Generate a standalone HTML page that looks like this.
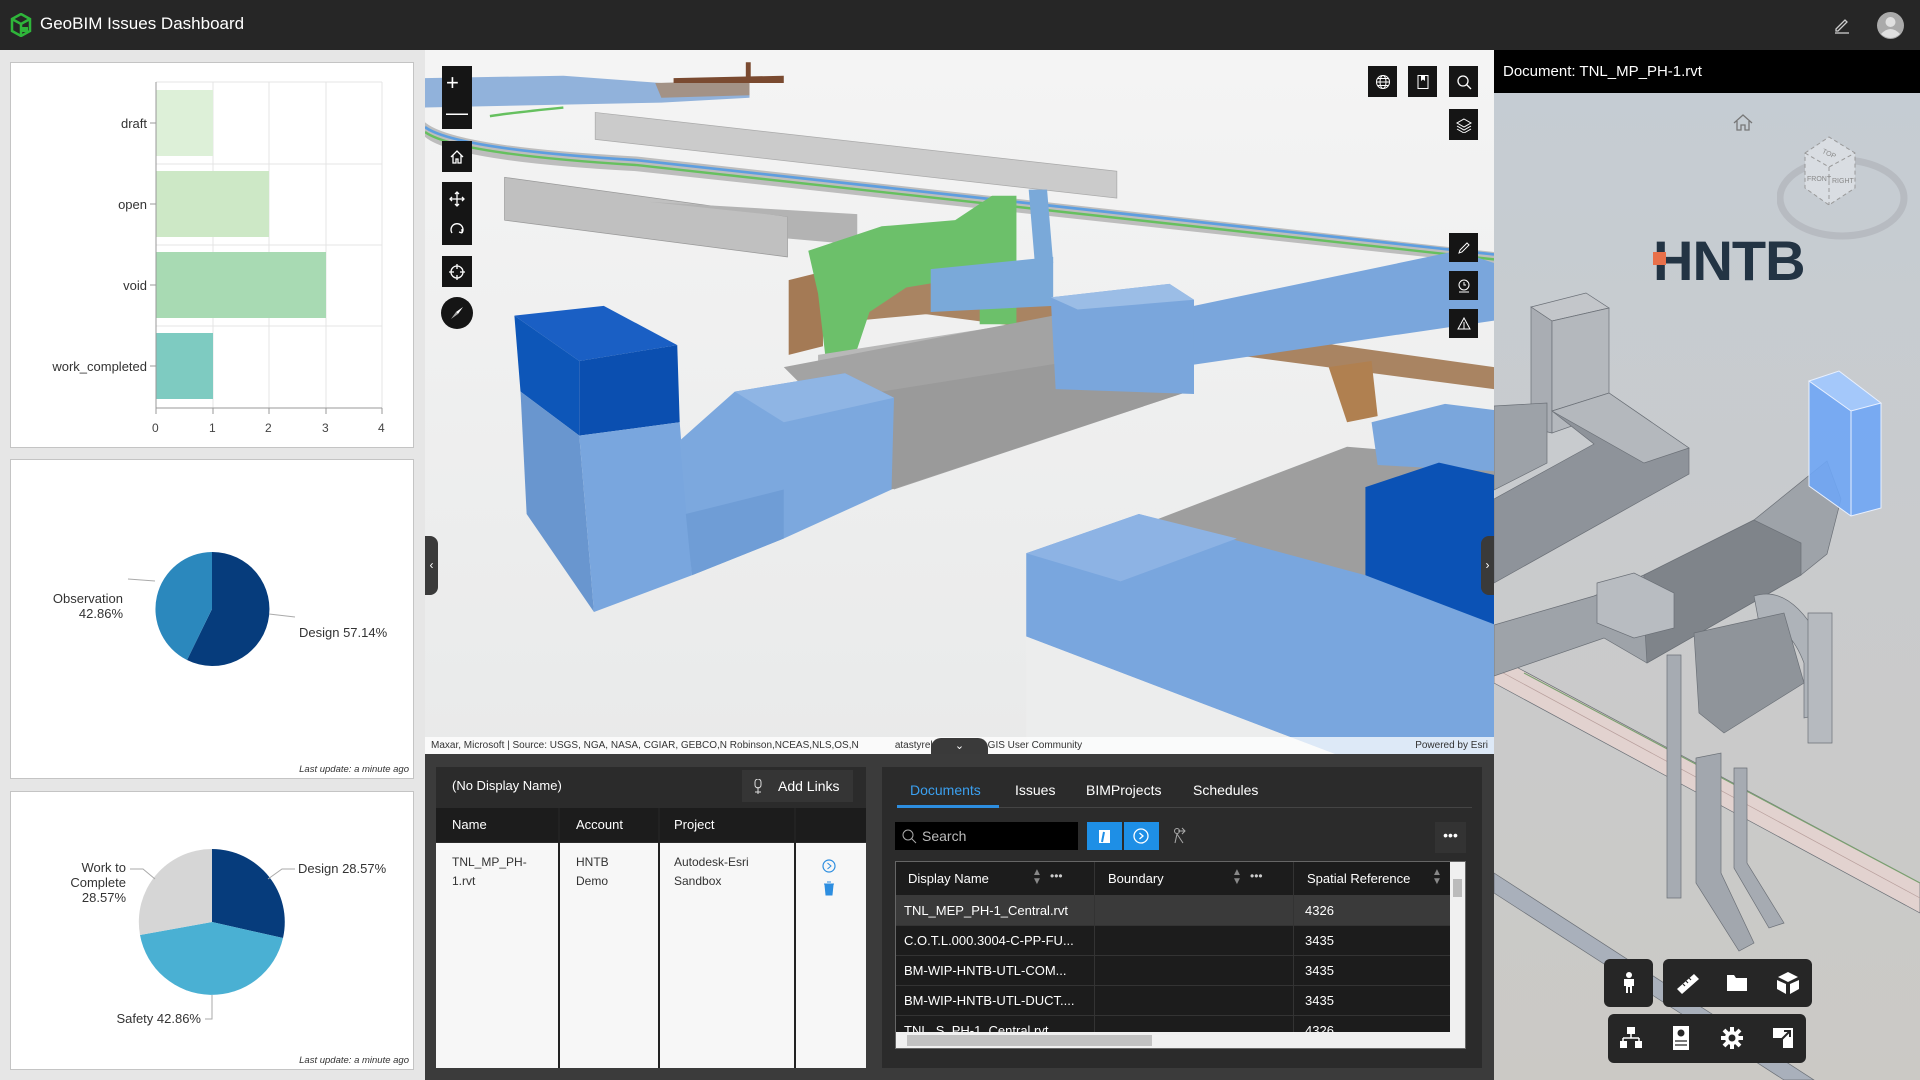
<!DOCTYPE html>
<html><head><meta charset="utf-8">
<style>
*{box-sizing:border-box;margin:0;padding:0}
body{width:1920px;height:1080px;overflow:hidden;background:#e6e6e6;font-family:"Liberation Sans",sans-serif;position:relative}
.a{position:absolute}
.hdr{left:0;top:0;width:1920px;height:50px;background:#262626}
.panel{background:#fff;border:1px solid #c4c4c4}
.lbl{font-size:13px;color:#333;position:absolute;white-space:nowrap}
.tk{font-size:12px;color:#444;position:absolute}
.upd{position:absolute;right:4px;bottom:3px;font-size:9.5px;font-style:italic;color:#333}
.btn{position:absolute;background:#151515;display:flex;align-items:center;justify-content:center}
.th{color:#fff;font-size:13px;position:absolute}
.cell{position:absolute;font-size:13px;color:#fff;white-space:nowrap}
.tb{position:absolute;background:#262626;border-radius:6px}
</style></head><body>
<div class="a hdr">
 <svg class="a" style="left:10px;top:13px" width="22" height="24" viewBox="0 0 22 24"><path d="M2 6 L11 1 L20 6 L20 18 L11 23 L2 18 Z M2 6 L11 11 L20 6 M11 11 L11 23" fill="none" stroke="#2fb53a" stroke-width="2.5"/><path d="M12 14 h6 v5 h-6z" fill="#2fb53a"/></svg>
 <div class="a" style="left:40px;top:14px;color:#fff;font-size:17px">GeoBIM Issues Dashboard</div>
 <svg class="a" style="left:1833px;top:16px" width="18" height="18" viewBox="0 0 18 18"><path d="M3 13 L12 4 L14 6 L5 15 L3 15 Z" fill="none" stroke="#ccc" stroke-width="1.3"/><path d="M2 17 H16" stroke="#ccc" stroke-width="1.3"/></svg>
 <svg class="a" style="left:1877px;top:12px" width="27" height="27" viewBox="0 0 27 27"><circle cx="13.5" cy="13.5" r="13.5" fill="#aaa"/><circle cx="13.5" cy="10" r="5" fill="#e0e0e0"/><path d="M4 22 Q13.5 12 23 22 Q13.5 30 4 22Z" fill="#e0e0e0"/></svg>
</div>

<!-- Left column -->
<div class="a panel" style="left:10px;top:62px;width:404px;height:386px">
 <svg class="a" style="left:-1px;top:-1px" width="404" height="386">
  <g stroke="#e4e4e4" stroke-width="1">
   <line x1="146" y1="20" x2="372" y2="20"/><line x1="146" y1="102" x2="372" y2="102"/><line x1="146" y1="183" x2="372" y2="183"/><line x1="146" y1="264" x2="372" y2="264"/>
   <line x1="203" y1="20" x2="203" y2="346"/><line x1="259" y1="20" x2="259" y2="346"/><line x1="316" y1="20" x2="316" y2="346"/><line x1="372" y1="20" x2="372" y2="346"/>
  </g>
  <rect x="146" y="28" width="57" height="66" fill="#ddf0d8"/>
  <rect x="146" y="109" width="113" height="66" fill="#cde8c6"/>
  <rect x="146" y="190" width="170" height="66" fill="#a8dab3"/>
  <rect x="146" y="271" width="57" height="66" fill="#7ecbc1"/>
  <g stroke="#999"><line x1="146" y1="20" x2="146" y2="346"/><line x1="146" y1="346" x2="372" y2="346"/>
  <line x1="140" y1="61" x2="146" y2="61"/><line x1="140" y1="142" x2="146" y2="142"/><line x1="140" y1="223" x2="146" y2="223"/><line x1="140" y1="304" x2="146" y2="304"/>
  <line x1="146" y1="346" x2="146" y2="352"/><line x1="203" y1="346" x2="203" y2="352"/><line x1="259" y1="346" x2="259" y2="352"/><line x1="316" y1="346" x2="316" y2="352"/><line x1="372" y1="346" x2="372" y2="352"/></g>
 </svg>
 <div class="lbl" style="right:266px;top:53px">draft</div>
 <div class="lbl" style="right:266px;top:134px">open</div>
 <div class="lbl" style="right:266px;top:215px">void</div>
 <div class="lbl" style="right:266px;top:296px">work_completed</div>
 <div class="tk" style="left:141px;top:358px">0</div><div class="tk" style="left:198px;top:358px">1</div><div class="tk" style="left:254px;top:358px">2</div><div class="tk" style="left:311px;top:358px">3</div><div class="tk" style="left:367px;top:358px">4</div>
</div>

<div class="a panel" style="left:10px;top:459px;width:404px;height:320px">
 <svg class="a" style="left:-1px;top:-1px" width="404" height="320">
  <path d="M202 93 A57 57 0 1 1 177 201 L202 150 Z" fill="#063c7c"/>
  <path d="M177 201 A57 57 0 0 1 202 93 L202 150 Z" fill="#2b88bd"/>
  <path d="M118 120 L145 122" stroke="#aaa" fill="none"/>
  <path d="M259 155 L285 158" stroke="#aaa" fill="none"/>
 </svg>
 <div class="lbl" style="right:290px;top:131px;text-align:right;line-height:15px">Observation<br>42.86%</div>
 <div class="lbl" style="left:288px;top:165px">Design 57.14%</div>
 <div class="upd">Last update: a minute ago</div>
</div>

<div class="a panel" style="left:10px;top:791px;width:404px;height:279px">
 <svg class="a" style="left:-1px;top:-1px" width="404" height="279">
  <path d="M202 58 A73 73 0 0 1 273 147 L202 131 Z" fill="#063c7c"/>
  <path d="M273 147 A73 73 0 0 1 130 144 L202 131 Z" fill="#4ab0d3"/>
  <path d="M130 144 A73 73 0 0 1 202 58 L202 131 Z" fill="#d6d6d6"/>
  <path d="M120 78 L133 78 L145 88" stroke="#aaa" fill="none"/>
  <path d="M258 88 L272 78 L285 78" stroke="#aaa" fill="none"/>
  <path d="M202 204 L202 228 L195 228" stroke="#aaa" fill="none"/>
 </svg>
 <div class="lbl" style="right:287px;top:68px;text-align:right;line-height:15px">Work to<br>Complete<br>28.57%</div>
 <div class="lbl" style="left:287px;top:69px">Design 28.57%</div>
 <div class="lbl" style="right:212px;top:219px">Safety 42.86%</div>
 <div class="upd">Last update: a minute ago</div>
</div>

<!-- Map -->
<div class="a" style="left:425px;top:50px;width:1069px;height:704px;background:#eceded;overflow:hidden">
 <svg class="a" style="left:0;top:0" width="1069" height="704" viewBox="347 41 873 575" preserveAspectRatio="none">
  <defs><linearGradient id="sky" x1="0" y1="0" x2="0" y2="1"><stop offset="0" stop-color="#f4f4f4"/><stop offset="1" stop-color="#e9eaea"/></linearGradient></defs>
  <rect x="347" y="41" width="873" height="575" fill="url(#sky)"/>
  <!-- top clutter -->
  <path d="M347 64 L460 62 L540 68 L612 66 L612 80 L540 84 L440 86 L347 88Z" fill="#7fa6d6" opacity=".85"/>
  <path d="M535 68 L612 66 L612 78 L540 80Z" fill="#a88a70" opacity=".8"/>
  <path d="M550 64 L640 62 L640 68 L550 68Z" fill="#7a4a30"/><rect x="609" y="51" width="4" height="13" fill="#7a4a30"/>
  <!-- rails -->
  <path d="M347 100 Q370 120 520 128 L1220 206 L1220 216 L520 140 Q370 132 347 112Z" fill="#bdbdbd"/>
  <path d="M347 104 Q372 122 520 131 L1220 208" stroke="#5d9ee0" stroke-width="2.2" fill="none"/>
  <path d="M347 108 Q372 126 520 135 L1220 212" stroke="#66c05f" stroke-width="2" fill="none"/>
  <path d="M400 95 Q420 92 460 88" stroke="#66c05f" stroke-width="2" fill="none"/>
  <path d="M486 92 L912 140 L912 162 L486 114Z" fill="#cbcbcb" stroke="#aaa" stroke-width=".6"/>
  <path d="M412 145 L643 177 L643 210 L412 180Z" fill="#c0c0c0" stroke="#999" stroke-width=".6"/>
  <path d="M530 165 L700 175 L700 200 L643 195 L643 177Z" fill="#b3b3b3"/>
  <!-- brown -->
  <path d="M644 229 L672 222 L672 283 L644 290Z" fill="#a47a55"/>
  <path d="M720 230 L1220 300 L1220 318 L720 252Z" fill="#a98462"/>
  <path d="M1085 300 L1120 295 L1125 340 L1100 345Z" fill="#b08050"/>
  <path d="M690 225 L790 215 L830 225 L830 250 L700 262Z" fill="#a98462"/>
  <!-- green ducts -->
  <path d="M660 205 L720 185 L780 180 L810 160 L830 160 L830 265 L800 265 L800 225 L740 235 L710 255 L695 300 L675 300 L668 240Z" fill="#6cc06a"/>
  <path d="M760 220 L860 210 L860 250 L760 255Z" fill="#7aa9d9"/>
  <path d="M840 155 L855 155 L860 215 L845 215Z" fill="#7aa9d9"/>
  <path d="M668 290 L860 260 L880 280 L880 300 L668 310Z" fill="#b8b8b8"/>
  <!-- gray long duct -->
  <path d="M640 300 L860 258 L970 280 L970 320 L730 400 L680 340Z" fill="#a3a3a3"/>
  <path d="M720 320 L970 280 L970 320 L728 400Z" fill="#9a9a9a"/>
  <!-- upper blue box + right duct -->
  <path d="M858 243 L955 232 L975 245 L975 322 L862 318Z" fill="#7aa6dc"/>
  <path d="M858 243 L955 232 L975 245 L880 253Z" fill="#9bbde6"/>
  <path d="M975 250 L1190 205 L1220 215 L1220 262 L975 298Z" fill="#7aa6dc"/>
  <!-- left tall box -->
  <path d="M420 258 L493 250 L553 282 L473 295Z" fill="#1a5fc4"/>
  <path d="M473 295 L553 282 L555 345 L473 356Z" fill="#0b4fb0"/>
  <path d="M420 258 L473 295 L473 356 L425 320Z" fill="#0d56b8"/>
  <path d="M425 320 L473 356 L485 500 L430 420Z" fill="#6996cf"/>
  <path d="M473 356 L555 345 L565 470 L485 500Z" fill="#79a6de"/>
  <!-- connector -->
  <path d="M555 360 L600 320 L690 305 L730 325 L728 400 L640 440 L565 470Z" fill="#7ca8de"/>
  <path d="M600 320 L690 305 L730 325 L640 345 Z" fill="#8fb5e4"/>
  <path d="M560 420 L640 400 L640 440 L565 470Z" fill="#6f9dd6"/>
  <!-- right gray + big blue -->
  <path d="M930 430 L1100 365 L1220 375 L1220 470 L1010 470Z" fill="#9e9e9e"/>
  <path d="M1120 345 L1180 330 L1220 335 L1220 385 L1125 380Z" fill="#7aa6dc"/>
  <path d="M838 452 L930 420 L1115 470 L1220 500 L1220 616 L1090 616 L838 520Z" fill="#79a6de"/>
  <path d="M838 452 L930 420 L1010 440 L915 475Z" fill="#8db3e4"/>
  <path d="M838 520 L1090 616 L838 616Z" fill="#eceded"/>
  <path d="M1115 398 L1175 378 L1220 388 L1220 510 L1115 470Z" fill="#0b52b5"/>
 </svg>
 <!-- left toolbar -->
 <div class="btn" style="left:17px;top:16px;width:30px;height:63px;flex-direction:column;color:#fff;font-size:22px;line-height:30px">+<br>—</div>
 <div class="btn" style="left:17px;top:91px;width:30px;height:31px"><svg width="16" height="16" viewBox="0 0 16 16"><path d="M2 8 L8 2 L14 8 M4 6 V14 H7 V10 H9 V14 H12 V6" fill="none" stroke="#fff" stroke-width="1.3"/></svg></div>
 <div class="btn" style="left:17px;top:132px;width:30px;height:63px;flex-direction:column;gap:14px"><svg width="16" height="16" viewBox="0 0 16 16"><path d="M8 1 V15 M1 8 H15 M6 3 L8 1 L10 3 M6 13 L8 15 L10 13 M3 6 L1 8 L3 10 M13 6 L15 8 L13 10" fill="none" stroke="#fff" stroke-width="1.3"/></svg><svg width="16" height="16" viewBox="0 0 16 16"><path d="M3 12 A6 6 0 1 1 13 12 M13 12 L13 8 M13 12 L10 11" fill="none" stroke="#fff" stroke-width="1.3"/></svg></div>
 <div class="btn" style="left:17px;top:206px;width:30px;height:31px"><svg width="16" height="16" viewBox="0 0 16 16"><circle cx="8" cy="8" r="6" fill="none" stroke="#fff" stroke-width="1.3"/><path d="M8 0 V5 M8 11 V16 M0 8 H5 M11 8 H16" stroke="#fff" stroke-width="1.3"/></svg></div>
 <div class="btn" style="left:16px;top:247px;width:32px;height:32px;border-radius:50%"><svg width="16" height="16" viewBox="0 0 16 16"><path d="M14 2 L7 7 L9 9Z" fill="#fff"/><path d="M2 14 L7 7 L9 9Z" fill="#aaa"/></svg></div>
 <!-- top right -->
 <div class="btn" style="left:943px;top:16px;width:29px;height:31px"><svg width="16" height="16" viewBox="0 0 16 16"><circle cx="8" cy="8" r="6.5" fill="none" stroke="#fff"/><ellipse cx="8" cy="8" rx="3" ry="6.5" fill="none" stroke="#fff"/><path d="M1.5 8 H14.5 M3 4.5 H13 M3 11.5 H13" stroke="#fff"/></svg></div>
 <div class="btn" style="left:983px;top:16px;width:29px;height:31px"><svg width="16" height="16" viewBox="0 0 16 16"><rect x="3" y="1.5" width="10" height="13" fill="none" stroke="#fff"/><path d="M6 1.5 V7 L8 5.5 L10 7 V1.5" fill="#fff"/></svg></div>
 <div class="btn" style="left:1024px;top:16px;width:29px;height:31px"><svg width="16" height="16" viewBox="0 0 16 16"><circle cx="7" cy="7" r="5" fill="none" stroke="#fff" stroke-width="1.3"/><path d="M10.5 10.5 L15 15" stroke="#fff" stroke-width="1.3"/></svg></div>
 <div class="btn" style="left:1024px;top:59px;width:29px;height:31px"><svg width="16" height="16" viewBox="0 0 16 16"><path d="M8 2 L15 6 L8 10 L1 6Z M1 9 L8 13 L15 9 M1 12 L8 16 L15 12" fill="none" stroke="#fff"/></svg></div>
 <div class="btn" style="left:1024px;top:183px;width:29px;height:29px"><svg width="14" height="14" viewBox="0 0 14 14"><path d="M2 12 L3 9 L10 2 L12 4 L5 11Z" fill="none" stroke="#fff"/></svg></div>
 <div class="btn" style="left:1024px;top:221px;width:29px;height:29px"><svg width="14" height="14" viewBox="0 0 14 14"><circle cx="7" cy="6" r="5" fill="none" stroke="#fff"/><path d="M7 3 V6 H9 M2 13 H12" stroke="#fff"/></svg></div>
 <div class="btn" style="left:1024px;top:259px;width:29px;height:29px"><svg width="14" height="14" viewBox="0 0 14 14"><path d="M7 1 L13 12 H1Z M7 5 V12" fill="none" stroke="#fff"/></svg></div>
 <div class="a" style="left:0;top:486px;width:13px;height:59px;background:#3a3a3a;border-radius:0 8px 8px 0;color:#fff;font-size:12px;line-height:59px;text-align:center">‹</div>
 <div class="a" style="right:0;top:486px;width:13px;height:59px;background:#3a3a3a;border-radius:8px 0 0 8px;color:#fff;font-size:12px;line-height:59px;text-align:center">›</div>
 <div class="a" style="left:0;top:687px;width:1069px;height:17px;background:rgba(255,255,255,.75);font-size:10px;color:#333;line-height:17px;padding-left:6px;white-space:nowrap">Maxar, Microsoft | Source: USGS, NGA, NASA, CGIAR, GEBCO,N Robinson,NCEAS,NLS,OS,N&nbsp;&nbsp;&nbsp;&nbsp;&nbsp;&nbsp;&nbsp;&nbsp;&nbsp;&nbsp;&nbsp;&nbsp;&nbsp;atastyrelsen and the GIS User Community<span style="position:absolute;right:6px">Powered by Esri</span></div>
 <div class="a" style="left:506px;top:688px;width:57px;height:16px;background:#3a3a3a;border-radius:10px 10px 0 0;color:#fff;font-size:11px;text-align:center;line-height:16px">⌄</div>
</div>

<!-- bottom area -->
<div class="a" style="left:425px;top:754px;width:1069px;height:326px;background:#3b3b3b"></div>
<div class="a" style="left:436px;top:767px;width:430px;height:301px;background:#2b2b2b">
 <div class="a" style="left:16px;top:11px;color:#fff;font-size:13px">(No Display Name)</div>
 <div class="a" style="left:306px;top:3px;width:111px;height:32px;background:#353535;color:#fff;font-size:14px;line-height:32px;padding-left:36px">Add Links</div>
 <svg class="a" style="left:314px;top:12px" width="16" height="16" viewBox="0 0 16 16"><path d="M5 3 a3 3 0 0 1 6 0 v3 M5 3 v3 a3 3 0 0 0 6 0 M8 8 v7 M5 13 h6" fill="none" stroke="#ddd"/></svg>
 <div class="a" style="left:0;top:41px;width:430px;height:34px;background:#1c1c1c"></div>
 <div class="th" style="left:16px;top:50px">Name</div><div class="th" style="left:140px;top:50px">Account</div><div class="th" style="left:238px;top:50px">Project</div>
 <div class="a" style="left:0;top:76px;width:430px;height:225px;background:#f7f7f7"></div>
 <div class="a" style="left:122px;top:41px;width:2px;height:260px;background:#222"></div>
 <div class="a" style="left:222px;top:41px;width:2px;height:260px;background:#222"></div>
 <div class="a" style="left:358px;top:41px;width:2px;height:260px;background:#222"></div>
 <div class="a" style="left:16px;top:86px;font-size:12px;color:#333;line-height:19px">TNL_MP_PH-<br>1.rvt</div>
 <div class="a" style="left:140px;top:86px;font-size:12px;color:#333;line-height:19px">HNTB<br>Demo</div>
 <div class="a" style="left:238px;top:86px;font-size:12px;color:#333;line-height:19px">Autodesk-Esri<br>Sandbox</div>
 <svg class="a" style="left:386px;top:92px" width="14" height="42" viewBox="0 0 14 42"><circle cx="7" cy="7" r="6" fill="none" stroke="#2d8ee0" stroke-width="1.2"/><path d="M5.5 4 L9 7 L5.5 10" fill="none" stroke="#2d8ee0"/><path d="M2 25 H12 M5 23 H9 M3 26 L4 36 H10 L11 26Z" fill="#2d8ee0" stroke="#2d8ee0"/></svg>
</div>
<div class="a" style="left:882px;top:767px;width:600px;height:301px;background:#2b2b2b">
 <div class="a" style="left:28px;top:15px;color:#3ba0f0;font-size:14px">Documents</div>
 <div class="a" style="left:133px;top:15px;color:#fff;font-size:14px">Issues</div>
 <div class="a" style="left:204px;top:15px;color:#fff;font-size:14px">BIMProjects</div>
 <div class="a" style="left:311px;top:15px;color:#fff;font-size:14px">Schedules</div>
 <div class="a" style="left:15px;top:40px;width:575px;height:1px;background:#444"></div>
 <div class="a" style="left:15px;top:38px;width:102px;height:3px;background:#2d8ee0"></div>
 <div class="a" style="left:13px;top:55px;width:183px;height:28px;background:#000;color:#bbb;font-size:14px;line-height:28px;padding-left:27px">Search</div>
 <svg class="a" style="left:20px;top:62px" width="15" height="15" viewBox="0 0 15 15"><circle cx="6" cy="6" r="5" fill="none" stroke="#aaa"/><path d="M9.5 9.5 L14 14" stroke="#aaa"/></svg>
 <div class="a" style="left:205px;top:55px;width:35px;height:28px;background:#1e8fe6"></div>
 <div class="a" style="left:242px;top:55px;width:35px;height:28px;background:#1e8fe6"></div>
 <svg class="a" style="left:215px;top:61px" width="16" height="16" viewBox="0 0 16 16"><rect x="2" y="2" width="11" height="13" fill="#fff"/><path d="M7 4 L5 14" stroke="#1e8fe6" stroke-width="2"/></svg>
 <svg class="a" style="left:251px;top:61px" width="16" height="16" viewBox="0 0 16 16"><circle cx="8" cy="8" r="7" fill="none" stroke="#fff" stroke-width="1.3"/><path d="M6.5 5 L10 8 L6.5 11" fill="none" stroke="#fff" stroke-width="1.3"/></svg>
 <svg class="a" style="left:290px;top:60px" width="16" height="18" viewBox="0 0 16 18"><circle cx="5" cy="4" r="2.5" fill="none" stroke="#aaa"/><path d="M5 7 L3 16 M5 7 L11 16 M6 4 H13 M10 1 L13 4 L10 7" fill="none" stroke="#aaa"/></svg>
 <div class="a" style="left:553px;top:55px;width:31px;height:31px;background:#333;color:#fff;font-size:14px;text-align:center;line-height:26px">•••</div>
 <div class="a" style="left:13px;top:94px;width:571px;height:188px;background:#1c1c1c;border:1px solid #666"></div>
 <div class="a" style="left:14px;top:95px;width:554px;height:33px;background:#1c1c1c"></div>
 <div class="th" style="left:26px;top:104px">Display Name</div>
 <div class="a" style="left:150px;top:101px;color:#888;font-size:10px;line-height:9px">▲<br>▼</div><div class="a" style="left:168px;top:102px;color:#ccc;font-size:12px">•••</div>
 <div class="th" style="left:226px;top:104px">Boundary</div>
 <div class="a" style="left:350px;top:101px;color:#888;font-size:10px;line-height:9px">▲<br>▼</div><div class="a" style="left:368px;top:102px;color:#ccc;font-size:12px">•••</div>
 <div class="th" style="left:425px;top:104px">Spatial Reference</div>
 <div class="a" style="left:550px;top:101px;color:#888;font-size:10px;line-height:9px">▲<br>▼</div>
 <div class="a" style="left:14px;top:128px;width:554px;height:30px;background:#3a3a3a"></div>
 <div class="a" style="left:14px;top:158px;width:554px;height:1px;background:#333"></div>
 <div class="a" style="left:14px;top:188px;width:554px;height:1px;background:#333"></div>
 <div class="a" style="left:14px;top:218px;width:554px;height:1px;background:#333"></div>
 <div class="a" style="left:14px;top:248px;width:554px;height:1px;background:#333"></div>
 <div class="a" style="left:212px;top:95px;width:1px;height:170px;background:#333"></div>
 <div class="a" style="left:411px;top:95px;width:1px;height:170px;background:#333"></div>
 <div class="cell" style="left:22px;top:136px">TNL_MEP_PH-1_Central.rvt</div><div class="cell" style="left:423px;top:136px">4326</div>
 <div class="cell" style="left:22px;top:166px">C.O.T.L.000.3004-C-PP-FU...</div><div class="cell" style="left:423px;top:166px">3435</div>
 <div class="cell" style="left:22px;top:196px">BM-WIP-HNTB-UTL-COM...</div><div class="cell" style="left:423px;top:196px">3435</div>
 <div class="cell" style="left:22px;top:226px">BM-WIP-HNTB-UTL-DUCT....</div><div class="cell" style="left:423px;top:226px">3435</div>
 <div class="a" style="left:14px;top:249px;width:554px;height:16px;overflow:hidden"><div class="cell" style="left:8px;top:7px">TNL_S_PH-1_Central.rvt</div><div class="cell" style="left:409px;top:7px">4326</div></div>
 <div class="a" style="left:568px;top:95px;width:15px;height:170px;background:#f0f0f0"></div>
 <div class="a" style="left:571px;top:112px;width:9px;height:18px;background:#bbb"></div>
 <div class="a" style="left:14px;top:265px;width:569px;height:16px;background:#f0f0f0"></div>
 <div class="a" style="left:25px;top:268px;width:245px;height:11px;background:#c2c2c2"></div>
</div>

<!-- Right panel -->
<div class="a" style="left:1494px;top:50px;width:426px;height:43px;background:#000;color:#fff;font-size:15px;line-height:43px;padding-left:9px">Document: TNL_MP_PH-1.rvt</div>
<div class="a" style="left:1494px;top:93px;width:426px;height:987px;overflow:hidden;background:linear-gradient(#c5ccd3,#c9cbcd 45%,#cbc9c5)">
 <svg class="a" style="left:0;top:0" width="426" height="987" viewBox="0 0 426 987">
  <g stroke="#6b7077" stroke-width=".7">
  <!-- lower-left rail -->
  <path d="M0 780 L320 987 L290 987 L0 800Z" fill="#a9b0bb"/>
  <!-- pink rail -->
  <path d="M0 562 L426 790 L426 820 L0 590Z" fill="#e2d2cf"/>
  <path d="M0 575 L426 805" stroke="#b89f9c" fill="none"/>
  <path d="M30 580 L426 790" stroke="#7aa070" stroke-width="1.2" fill="none"/>
  <!-- tall box -->
  <path d="M37 214 L92 200 L115 215 L58 228Z" fill="#c3c6ca"/>
  <path d="M37 214 L58 228 L58 340 L37 335Z" fill="#a9adb3"/>
  <path d="M58 228 L115 215 L115 320 L58 340Z" fill="#b4b8bd"/>
  <!-- upper diagonal duct -->
  <path d="M58 318 L115 300 L195 355 L195 381 L150 406 L0 490 L0 406 L100 351Z" fill="#8e939a"/>
  <path d="M58 318 L115 300 L195 355 L150 370Z" fill="#b4b8bd"/>
  <path d="M0 313 L53 310 L53 370 L0 397Z" fill="#9da2a8"/>
  <!-- lower main duct -->
  <path d="M0 532 L100 503 L150 482 L260 427 L333 368 L347 406 L333 461 L307 482 L153 570 L110 545 L0 583Z" fill="#9ea3a9"/>
  <path d="M150 482 L260 427 L307 450 L307 482 L153 570 L150 520Z" fill="#7f848a"/>
  <path d="M103 490 L140 480 L180 500 L180 535 L140 545 L103 530Z" fill="#b8bcc1"/>
  <!-- pipes -->
  <path d="M173 562 L187 562 L187 805 L173 805Z" fill="#a6abb2"/>
  <path d="M202 665 L227 660 L227 780 L260 850 L245 858 L202 790Z" fill="#a2a7ae"/>
  <path d="M240 675 L253 675 L253 770 L290 830 L275 835 L240 775Z" fill="#a6abb2"/>
  <path d="M260 503 Q300 490 333 560 L333 620 L310 625 L310 570 Q295 530 265 530Z" fill="#aeb3b9"/>
  <path d="M200 540 L290 520 L310 590 L230 640 L205 620Z" fill="#8f949a"/>
  <path d="M314 520 L338 520 L338 650 L314 650Z" fill="#b6babf"/>
  </g>
  <!-- blue box -->
  <path d="M315 288 L345 278 L387 310 L387 415 L357 423 L315 393Z" fill="#6fa6f5" opacity=".9"/>
  <path d="M315 288 L345 278 L387 310 L357 318Z" fill="#a4c8fa" stroke="#e8f0ff"/>
  <path d="M357 318 L357 423" stroke="#e8f0ff"/>
  <path d="M315 288 L315 393 L357 423 L387 415 L387 310" fill="none" stroke="#e8f0ff"/>
 </svg>
 <svg class="a" style="left:238px;top:20px" width="22" height="20" viewBox="0 0 22 20"><path d="M2 10 L11 2 L20 10 M5 8 V17 H9 V12 H13 V17 H17 V8" fill="none" stroke="#777" stroke-width="1.3"/></svg>
 <svg class="a" style="left:283px;top:40px" width="140" height="110" viewBox="0 0 140 110"><ellipse cx="65" cy="65" rx="62" ry="38" fill="none" stroke="#b3b7bd" stroke-width="7" opacity=".8"/><path d="M28 20 L52 4 L78 20 L78 55 L52 72 L28 55Z" fill="#d9dde2" stroke="#999" stroke-dasharray="4 3"/><path d="M28 20 L52 34 L78 20 M52 34 V72" fill="none" stroke="#999" stroke-dasharray="4 3"/><text x="45" y="22" font-size="7" fill="#888" font-family="Liberation Sans" transform="rotate(25 50 20)">TOP</text><text x="30" y="48" font-size="7" fill="#888" font-family="Liberation Sans">FRONT</text><text x="55" y="50" font-size="7" fill="#888" font-family="Liberation Sans">RIGHT</text></svg>
 <div class="a" style="left:159px;top:140px;font-size:56px;font-weight:bold;color:#233444;letter-spacing:-1px;font-family:'Liberation Sans',sans-serif;line-height:56px">HNTB</div>
 <div class="a" style="left:159px;top:159px;width:13px;height:13px;background:#e8704a"></div>
</div>
<!-- viewer toolbar -->
<div class="tb" style="left:1604px;top:959px;width:49px;height:48px"></div>
<div class="tb" style="left:1663px;top:959px;width:149px;height:48px"></div>
<div class="tb" style="left:1608px;top:1014px;width:198px;height:49px"></div>
<svg class="a" style="left:1617px;top:971px" width="24" height="24" viewBox="0 0 24 24"><circle cx="12" cy="4" r="3" fill="#fff"/><path d="M7 8 H17 V15 H15 V22 H13 V16 H11 V22 H9 V15 H7Z" fill="#fff"/></svg>
<svg class="a" style="left:1675px;top:971px" width="26" height="24" viewBox="0 0 26 24"><path d="M2 18 L19 3 L24 8 L7 23Z" fill="#fff"/><path d="M8 13 l2 2 M11 10 l2 2 M14 7 l2 2" stroke="#262626" stroke-width="1.2"/></svg>
<svg class="a" style="left:1725px;top:972px" width="24" height="22" viewBox="0 0 24 22"><path d="M2 3 H9 L11 6 H22 V19 H2Z" fill="#fff"/></svg>
<svg class="a" style="left:1775px;top:971px" width="26" height="24" viewBox="0 0 26 24"><path d="M13 1 L23 6 L13 11 L3 6Z M2 9 L11 13 V23 L2 18Z M24 9 L15 13 V23 L24 18Z" fill="#fff"/></svg>
<svg class="a" style="left:1619px;top:1026px" width="24" height="24" viewBox="0 0 24 24"><rect x="8" y="1" width="8" height="7" fill="#fff"/><path d="M12 8 V12 M4 12 H20 M4 12 V15 M20 12 V15" stroke="#fff" stroke-width="1.5" fill="none"/><rect x="1" y="15" width="7" height="7" fill="#fff"/><rect x="16" y="15" width="7" height="7" fill="#fff"/></svg>
<svg class="a" style="left:1670px;top:1025px" width="22" height="26" viewBox="0 0 22 26"><rect x="3" y="1" width="16" height="24" fill="#fff"/><circle cx="11" cy="8" r="3.5" fill="#262626"/><path d="M5 16 H17 M5 20 H17" stroke="#262626" stroke-width="1.2"/></svg>
<svg class="a" style="left:1720px;top:1026px" width="24" height="24" viewBox="0 0 24 24"><circle cx="12" cy="12" r="7" fill="#fff"/><g stroke="#fff" stroke-width="4"><path d="M12 1 V23 M1 12 H23 M4 4 L20 20 M20 4 L4 20"/></g><circle cx="12" cy="12" r="3.5" fill="#262626"/></svg>
<svg class="a" style="left:1771px;top:1026px" width="24" height="24" viewBox="0 0 24 24"><rect x="2" y="2" width="20" height="20" fill="#fff"/><path d="M2 22 V12 H12 V22Z" fill="#262626"/><path d="M10 14 L19 5 M13 5 H19 V11" stroke="#262626" stroke-width="2" fill="none"/></svg>
</body></html>
